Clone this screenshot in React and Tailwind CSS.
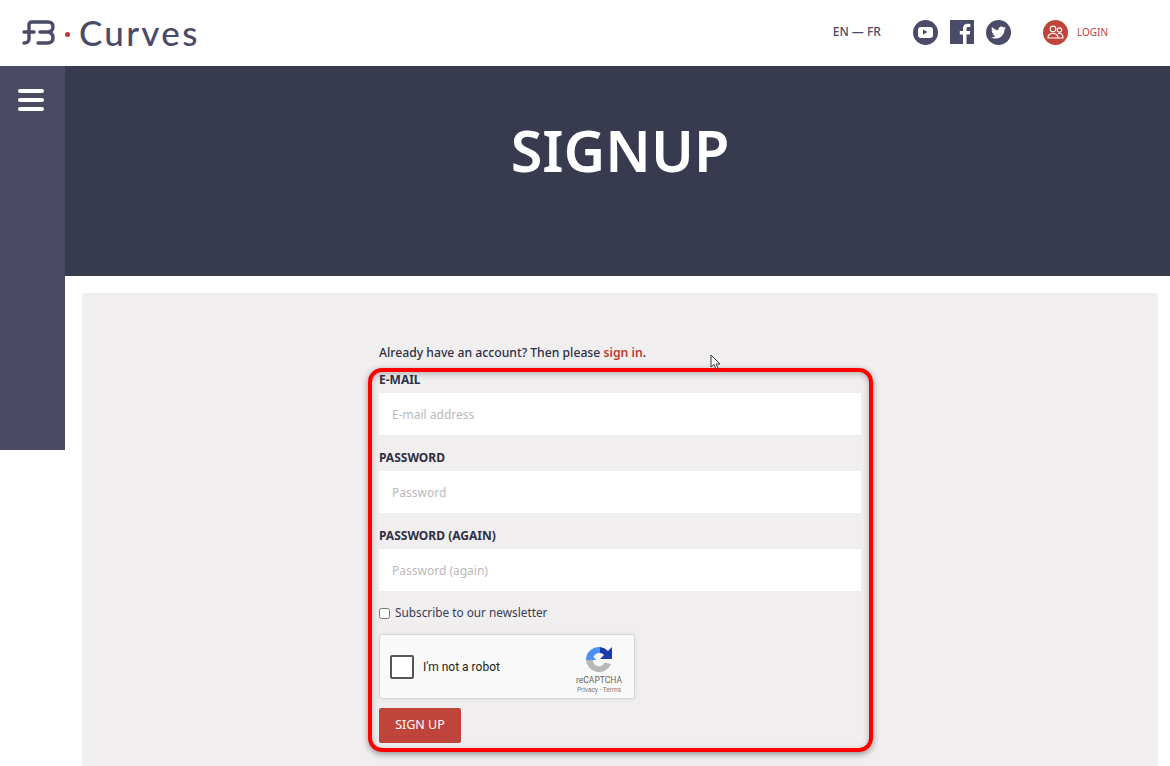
import React from 'react';
import { FaTwitter } from 'react-icons/fa';

const Logo = () => (
  <div className="flex items-center">
    {/* monogram */}
    <svg width="33" height="26" viewBox="0 0 33 26" fill="none" stroke="#4a4b68" strokeWidth="3.4" strokeLinecap="round" strokeLinejoin="round">
      <path d="M2 13 H12 M2 24 Q7 24 7 20 V6 Q7 3 10 3 H26 Q31 3 31 8 Q31 13 25 13 H18 M25 13 Q31 13 31 19 Q31 24 25 24 H16" />
    </svg>
    <span className="w-[5px] h-[5px] rounded-full bg-[#c0392f] ml-[10px] mr-[9px] mt-[5px]"></span>
    <span className="font-['Lato',sans-serif] text-[35px] leading-none text-[#4a4b68] tracking-[2.3px] font-medium">Curves</span>
  </div>
);

const YoutubeCircle = () => (
  <div className="w-[25px] h-[25px] rounded-full bg-[#4a4b68] flex items-center justify-center">
    <div className="w-[15px] h-[11px] rounded-[3px] bg-white flex items-center justify-center">
      <svg width="6" height="6" viewBox="0 0 6 6"><path d="M1 0.5 L5.5 3 L1 5.5 Z" fill="#4a4b68" /></svg>
    </div>
  </div>
);

const FacebookSquare = () => (
  <svg width="24" height="24" viewBox="0 0 24 24" className="ml-[12px]">
    <rect width="24" height="24" fill="#4a4b68" />
    <path d="M16.5 24 V14.5 H19.7 L20.2 11 H16.5 V8.7 C16.5 7.7 16.8 7 18.2 7 H20.3 V3.9 C19.9 3.85 18.8 3.7 17.5 3.7 C14.8 3.7 13 5.4 13 8.3 V11 H9.8 V14.5 H13 V24 Z" fill="#fff" />
  </svg>
);

const TwitterCircle = () => (
  <div className="w-[25px] h-[25px] rounded-full bg-[#4a4b68] flex items-center justify-center ml-[12px]">
    <FaTwitter className="text-white w-[15px] h-[15px]" />
  </div>
);

const LoginIcon = () => (
  <svg width="17" height="14" viewBox="0 0 17 14" fill="none" stroke="#fff" strokeWidth="1.2" strokeLinejoin="round">
    <circle cx="6" cy="4" r="2.8" />
    <path d="M1 13 Q1 8.5 6 8.5 Q11 8.5 11 13 Z" />
    <circle cx="12.5" cy="5" r="2.2" />
    <path d="M11 8.5 Q16 7.5 16 13 H11" />
  </svg>
);

const Header = () => (
  <header className="h-[66px] bg-white flex items-center pl-[22px] pb-[2px]">
    <Logo />
    <div className="ml-auto flex items-center pr-[62px]">
      <span className="text-[12px] font-medium text-[#4a4b68] mr-[32px]">EN — FR</span>
      <YoutubeCircle />
      <FacebookSquare />
      <TwitterCircle />
      <div className="w-[25px] h-[25px] rounded-full bg-[#bf443a] flex items-center justify-center ml-[32px]">
        <LoginIcon />
      </div>
      <span className="text-[10px] text-[#bf443a] ml-[9px]">LOGIN</span>
    </div>
  </header>
);

const Field = ({ label, placeholder }) => (
  <div className="mb-[15px]">
    <label className="block text-[12px] leading-[16px] font-bold text-[#2f3045] mb-[5px]">{label}</label>
    <input
      placeholder={placeholder}
      className="w-full h-[42px] bg-white px-[13px] text-[12px] outline-none placeholder:text-[#b9b9b9]"
    />
  </div>
);

const Recaptcha = () => (
  <div className="w-[256px] h-[65px] bg-[#f9f9f9] border border-[#d6d6d6] rounded-[3px] shadow-[0_0_4px_rgba(0,0,0,0.08)] flex items-center pl-[10px] font-['Roboto',sans-serif]">
    <div className="w-[24px] h-[24px] bg-white border-2 border-[#555] rounded-[2px]"></div>
    <span className="text-[12px] text-[#222] ml-[9px]">I'm not a robot</span>
    <div className="ml-auto w-[70px] flex flex-col items-center pt-[8px]">
      <svg width="27" height="28" viewBox="0 0 27 28">
        <path d="M0 13 A13 13 0 0 1 14 1 V7 A6.5 6.5 0 0 0 7.5 11 L10.5 14 H0 Z" fill="#4a90f5" />
        <path d="M14 1 A13 13 0 0 1 22 5 L26 1 V13 H14 L18 9 A6 6 0 0 0 14 7 Z" fill="#1c3aa9" />
        <path d="M0 14 H7 A6 6 0 0 0 18.5 16.5 L25 18 A13 13 0 0 1 0 14 Z" fill="#b8b8b8" />
      </svg>
      <span className="text-[8.5px] leading-[10px] text-[#666] mt-[1px]">reCAPTCHA</span>
      <span className="text-[6.5px] leading-[10px] text-[#777]">Privacy - Terms</span>
    </div>
  </div>
);

const Form = () => (
  <div className="w-[482px] mx-auto pt-[51px]">
    <p className="text-[12.2px] leading-[18px] font-medium text-[#2f3045] mb-[10px]">
      Already have an account? Then please <a className="text-[#c0392f] font-semibold">sign in</a>.
    </p>
    <Field label="E-MAIL" placeholder="E-mail address" />
    <Field label="PASSWORD" placeholder="Password" />
    <Field label="PASSWORD (AGAIN)" placeholder="Password (again)" />
    <label className="flex items-center text-[11.8px] text-[#3a3b55] mt-[-2px] h-[18px]">
      <input type="checkbox" className="w-[11px] h-[11px] mr-[5px] accent-white" />
      Subscribe to our newsletter
    </label>
    <div className="mt-[12px]"><Recaptcha /></div>
    <button className="mt-[9px] w-[82px] h-[35px] bg-[#bf443a] rounded-[2px] text-white text-[12.5px]">SIGN UP</button>
  </div>
);

export default function App() {
  return (
    <div className="relative w-full h-screen overflow-hidden bg-white font-['Noto_Sans','Open_Sans',sans-serif]">
      <Header />
      <div className="flex">
        <aside className="w-[65px] h-[384px] bg-[#4a4a65] shrink-0 pt-[23px] pl-[18px] flex flex-col gap-[5px]">
          <div className="w-[26px] h-[4px] rounded-full bg-white"></div>
          <div className="w-[26px] h-[4px] rounded-full bg-white"></div>
          <div className="w-[26px] h-[4px] rounded-full bg-white"></div>
        </aside>
        <main className="flex-1">
          <div className="h-[210px] bg-[#383a4f] flex justify-center pt-[43px] pl-[5px]">
            <h1 className="text-[57.5px] leading-[82px] font-semibold text-white">SIGNUP</h1>
          </div>
          <div className="pl-[17px] pr-[12px] pt-[17px]">
            <div className="bg-[#f0eeef] h-[600px]">
              <Form />
            </div>
          </div>
        </main>
      </div>

      {/* annotation box */}
      <div className="absolute left-[368px] top-[368px] w-[505px] h-[384px] border-4 border-[#ff0000] rounded-[14px] shadow-[0_2px_6px_rgba(0,0,0,0.4),inset_0_2px_6px_rgba(0,0,0,0.25)] pointer-events-none"></div>

      {/* mouse cursor */}
      <svg className="absolute left-[710px] top-[354px]" width="12" height="17" viewBox="0 0 12 17">
        <path d="M1 1 V13 L4 10.5 L6 15 L8 14 L6 10 H10 Z" fill="#fff" stroke="#333" strokeWidth="1" />
      </svg>
    </div>
  );
}
